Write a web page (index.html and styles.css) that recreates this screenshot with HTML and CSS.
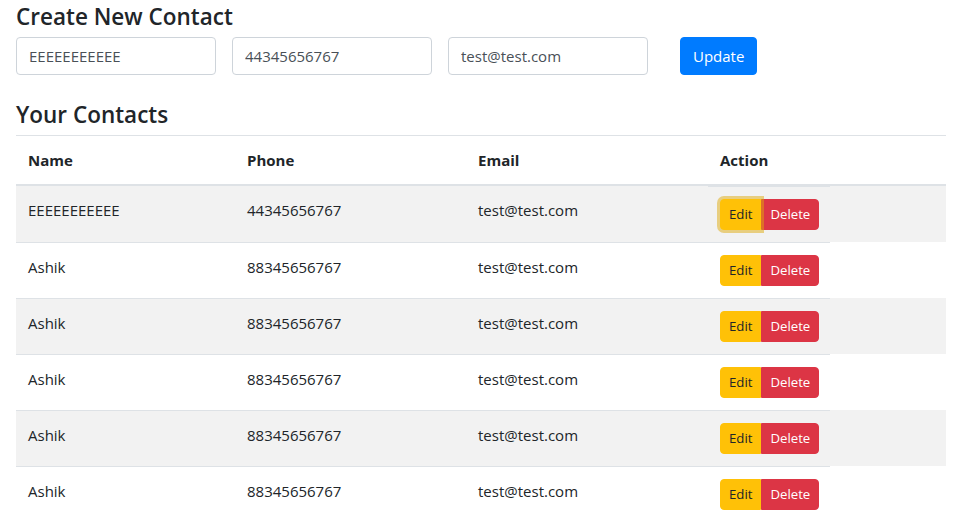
FILE: index.html
```html
<!DOCTYPE html>
<html lang="en">
<head>
<meta charset="utf-8">
<title>Contacts</title>
<link rel="stylesheet" href="styles.css">
</head>
<body>
<div class="container">
  <h4 class="heading">Create New Contact</h4>
  <form class="contact-form">
    <input class="form-control" type="text" value="EEEEEEEEEEE">
    <input class="form-control" type="text" value="44345656767">
    <input class="form-control" type="email" value="test@test.com">
    <button class="btn btn-primary" type="button">Update</button>
  </form>

  <h4 class="heading">Your Contacts</h4>
  <table class="contacts">
    <thead>
      <tr>
        <th class="col-name">Name</th>
        <th class="col-phone">Phone</th>
        <th class="col-email">Email</th>
        <th class="col-action">Action</th>
        <th class="col-filler"></th>
      </tr>
    </thead>
    <tbody>
      <tr>
        <td>EEEEEEEEEEE</td>
        <td>44345656767</td>
        <td>test@test.com</td>
        <td class="action"><div class="btn-group"><button class="btn btn-sm btn-warning is-focused">Edit</button><button class="btn btn-sm btn-danger">Delete</button></div></td>
        <td class="filler"></td>
      </tr>
      <tr>
        <td>Ashik</td>
        <td>88345656767</td>
        <td>test@test.com</td>
        <td class="action"><div class="btn-group"><button class="btn btn-sm btn-warning">Edit</button><button class="btn btn-sm btn-danger">Delete</button></div></td>
        <td class="filler"></td>
      </tr>
      <tr>
        <td>Ashik</td>
        <td>88345656767</td>
        <td>test@test.com</td>
        <td class="action"><div class="btn-group"><button class="btn btn-sm btn-warning">Edit</button><button class="btn btn-sm btn-danger">Delete</button></div></td>
        <td class="filler"></td>
      </tr>
      <tr>
        <td>Ashik</td>
        <td>88345656767</td>
        <td>test@test.com</td>
        <td class="action"><div class="btn-group"><button class="btn btn-sm btn-warning">Edit</button><button class="btn btn-sm btn-danger">Delete</button></div></td>
        <td class="filler"></td>
      </tr>
      <tr>
        <td>Ashik</td>
        <td>88345656767</td>
        <td>test@test.com</td>
        <td class="action"><div class="btn-group"><button class="btn btn-sm btn-warning">Edit</button><button class="btn btn-sm btn-danger">Delete</button></div></td>
        <td class="filler"></td>
      </tr>
      <tr>
        <td>Ashik</td>
        <td>88345656767</td>
        <td>test@test.com</td>
        <td class="action"><div class="btn-group"><button class="btn btn-sm btn-warning">Edit</button><button class="btn btn-sm btn-danger">Delete</button></div></td>
        <td class="filler"></td>
      </tr>
    </tbody>
  </table>
</div>
</body>
</html>
```

FILE: styles.css
```css
*, *::before, *::after {
  box-sizing: border-box;
}

html, body {
  margin: 0;
  padding: 0;
  background: #fff;
}

body {
  font-family: "Open Sans", "Noto Sans", sans-serif;
  font-size: 15px;
  line-height: 24px;
  color: #212529;
  overflow: hidden;
}

.container {
  padding: 0 15px 0 16px;
}

.heading {
  margin: 0 0 8px;
  padding-top: 4px;
  font-size: 22.5px;
  font-weight: 600;
  line-height: 25px;
}

.contact-form {
  display: flex;
  gap: 16px;
  margin: 0 0 23px;
}

.form-control {
  width: 200px;
  height: 38px;
  padding: 6px 12px;
  font: inherit;
  font-size: 15px;
  color: #495057;
  background: #fff;
  border: 1px solid #ced4da;
  border-radius: 4px;
  outline: none;
}

.btn {
  font-family: inherit;
  font-weight: 400;
  border: 1px solid transparent;
  cursor: pointer;
}

.btn-primary {
  margin-left: 16px;
  height: 38px;
  padding: 6px 12px;
  font-size: 15px;
  line-height: 24px;
  color: #fff;
  background: #007bff;
  border-color: #007bff;
  border-radius: 4px;
}

.contacts {
  width: 100%;
  table-layout: fixed;
  border-collapse: separate;
  border-spacing: 0;
}

.contacts th {
  padding: 12px;
  text-align: left;
  vertical-align: bottom;
  font-weight: 700;
  border-top: 1px solid #dee2e6;
  border-bottom: 2px solid #dee2e6;
}

.col-name { width: 219px; }
.col-phone { width: 231px; }
.col-email { width: 242px; }
.col-action { width: 122px; }

.contacts td {
  padding: 12px;
  vertical-align: top;
  border-top: 1px solid #dee2e6;
}

.contacts tbody tr:nth-child(odd) {
  background: #f2f2f2;
}

.contacts tbody tr:first-child td {
  border-top: 0;
}

.contacts tbody tr:first-child td.action {
  border-top: 1px solid #dee2e6;
}

.contacts td.filler {
  border-top: 0;
}

.btn-group {
  display: flex;
}

.btn-sm {
  height: 31px;
  padding: 4px 8px;
  font-size: 13.2px;
  line-height: 21px;
}

.btn-warning {
  color: #212529;
  background: #ffc107;
  border-color: #ffc107;
  border-radius: 4px 0 0 4px;
}

.btn-danger {
  color: #fff;
  background: #dc3545;
  border-color: #dc3545;
  border-radius: 0 4px 4px 0;
}

.is-focused {
  position: relative;
  box-shadow: 0 0 0 3px rgba(222, 170, 12, 0.5);
}
```
